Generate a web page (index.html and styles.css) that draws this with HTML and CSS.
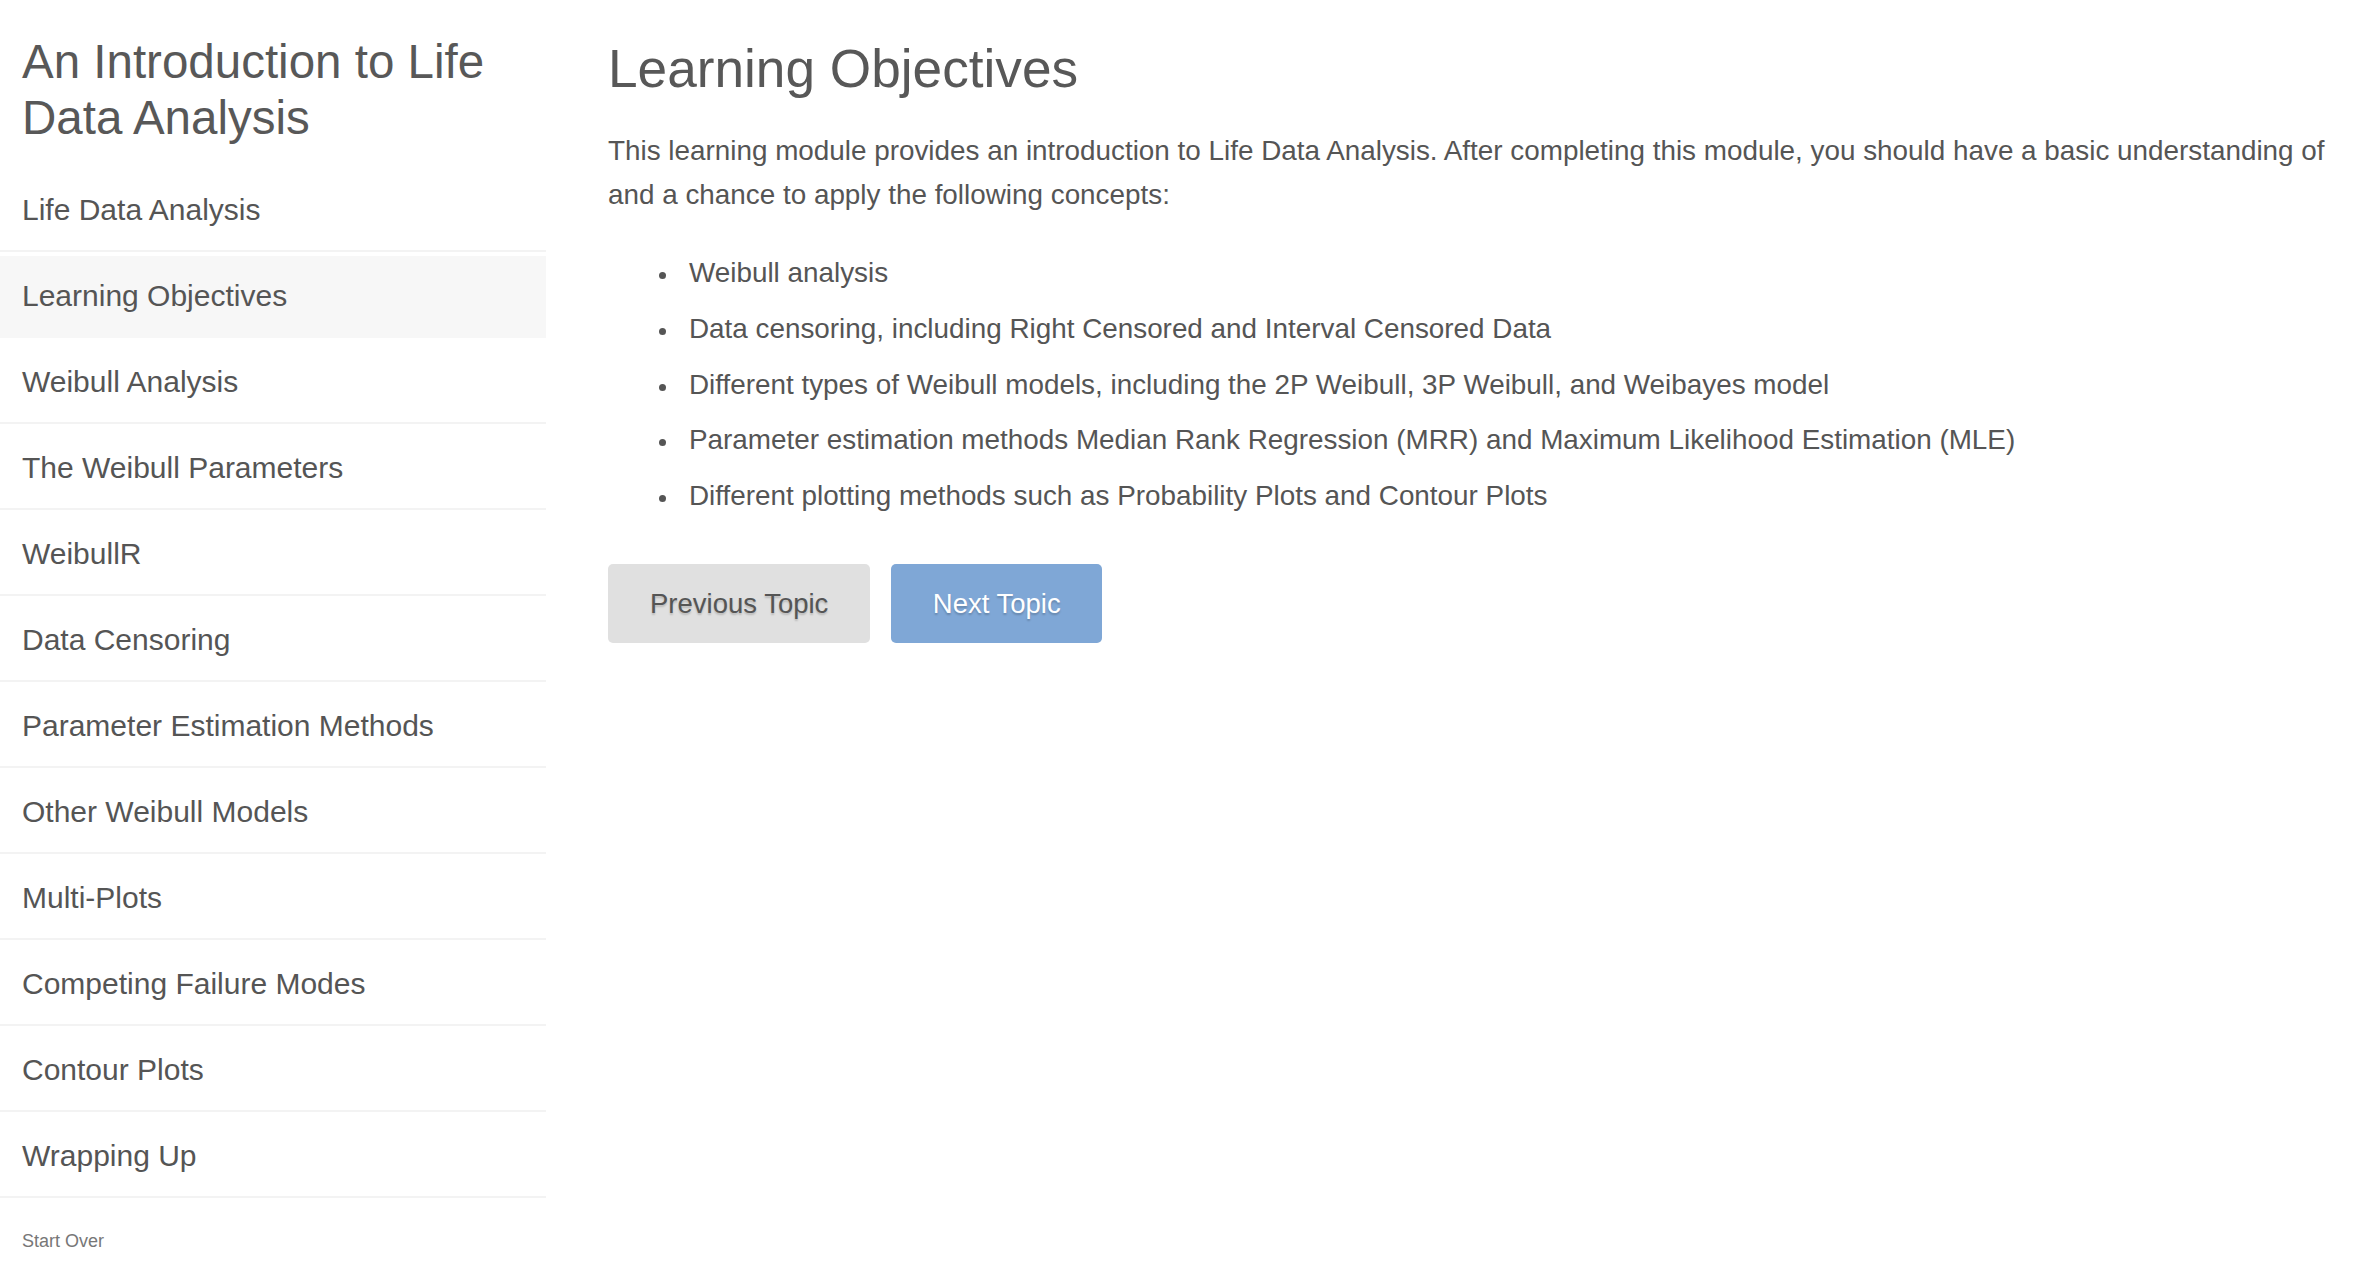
FILE: index.html
```html
<!DOCTYPE html>
<html lang="en">
<head>
<meta charset="utf-8">
<title>An Introduction to Life Data Analysis</title>
<link rel="stylesheet" href="styles.css">
</head>
<body>
<div class="page">
  <nav class="sidebar">
    <h1 class="tutorial-title">An Introduction to Life Data Analysis</h1>
    <ul class="topics">
      <li class="topic">Life Data Analysis</li>
      <li class="topic active">Learning Objectives</li>
      <li class="topic">Weibull Analysis</li>
      <li class="topic">The Weibull Parameters</li>
      <li class="topic">WeibullR</li>
      <li class="topic">Data Censoring</li>
      <li class="topic">Parameter Estimation Methods</li>
      <li class="topic">Other Weibull Models</li>
      <li class="topic">Multi-Plots</li>
      <li class="topic">Competing Failure Modes</li>
      <li class="topic">Contour Plots</li>
      <li class="topic">Wrapping Up</li>
    </ul>
    <div class="start-over">Start Over</div>
  </nav>
  <main class="content">
    <h2 class="section-title">Learning Objectives</h2>
    <p class="intro">This learning module provides an introduction to Life Data Analysis. After completing this module, you should have a basic understanding of and a chance to apply the following concepts:</p>
    <ul class="objectives">
      <li>Weibull analysis</li>
      <li>Data censoring, including Right Censored and Interval Censored Data</li>
      <li>Different types of Weibull models, including the 2P Weibull, 3P Weibull, and Weibayes model</li>
      <li>Parameter estimation methods Median Rank Regression (MRR) and Maximum Likelihood Estimation (MLE)</li>
      <li>Different plotting methods such as Probability Plots and Contour Plots</li>
    </ul>
    <div class="nav-buttons">
      <button class="btn btn-prev">Previous Topic</button>
      <button class="btn btn-next">Next Topic</button>
    </div>
  </main>
</div>
</body>
</html>
```

FILE: styles.css
```css
html, body {
  margin: 0;
  padding: 0;
  background: #ffffff;
}

body {
  font-family: "Liberation Sans", Arial, Helvetica, sans-serif;
  color: #555555;
  overflow: hidden;
}

.page {
  display: flex;
  align-items: flex-start;
}

.sidebar {
  width: 546px;
  flex: 0 0 546px;
  padding-top: 33.5px;
}

.tutorial-title {
  margin: 0 0 19px 0;
  padding: 0 22px;
  font-size: 47.5px;
  line-height: 56.6px;
  font-weight: normal;
  color: #585858;
}

.topics {
  list-style: none;
  margin: 0;
  padding: 0;
}

.topic {
  font-size: 30px;
  line-height: 44px;
  padding: 22px 22px 18px 22px;
  border-bottom: 2px solid #f3f3f3;
  color: #555555;
}

.topic.active {
  background: #f7f7f7;
  border-bottom-color: #f7f7f7;
  box-shadow: inset 0 4px 0 #ffffff;
}

.start-over {
  margin-top: 31px;
  padding: 0 22px;
  font-size: 18px;
  line-height: 24px;
  color: #777777;
}

.content {
  flex: 1 1 auto;
  margin-left: 62px;
  padding-right: 10px;
  padding-top: 40px;
  min-width: 0;
}

.section-title {
  margin: 0 0 30.5px 0;
  font-size: 53.2px;
  line-height: 58.5px;
  font-weight: normal;
  color: #585858;
}

.intro {
  margin: 0;
  font-size: 27.85px;
  line-height: 44px;
}

.objectives {
  list-style: none;
  margin: 34px 0 0 0;
  padding-left: 81px;
  font-size: 27.85px;
  line-height: 44px;
}

.objectives li {
  position: relative;
}

.objectives li::before {
  content: "";
  position: absolute;
  left: -30.5px;
  top: 21px;
  width: 7px;
  height: 7px;
  border-radius: 50%;
  background: #555555;
}

.objectives li + li {
  margin-top: 11.8px;
}

.nav-buttons {
  display: flex;
  gap: 21px;
  margin-top: 45.7px;
}

.btn {
  font-family: "Liberation Sans", Arial, Helvetica, sans-serif;
  font-size: 27.5px;
  line-height: 39px;
  padding: 20px 42px;
  border: none;
  border-radius: 5px;
  cursor: pointer;
}

.btn-prev {
  background: #e0e0e0;
  color: #555555;
  text-shadow: 0 2px 2px rgba(0, 0, 0, 0.18);
}

.btn-next {
  background: #7fa7d6;
  color: #ffffff;
  padding: 20px 41.5px;
  text-shadow: 0 2px 2px rgba(0, 0, 0, 0.2);
}
```
